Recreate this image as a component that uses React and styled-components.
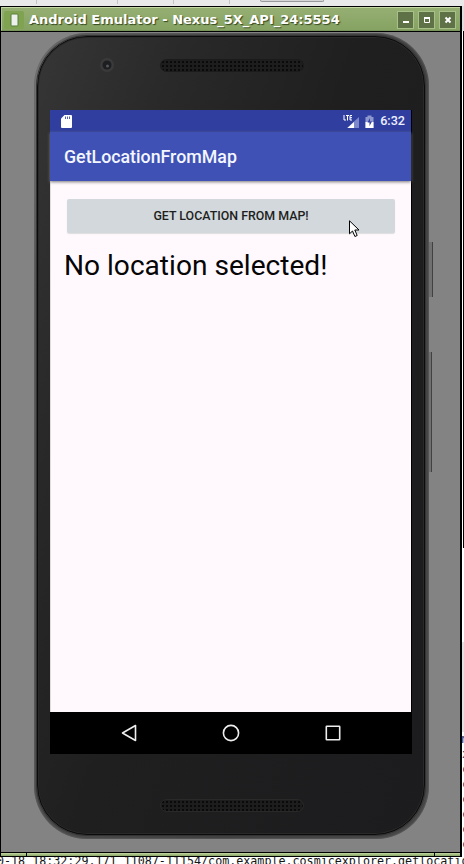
import React from "react";
import styled, { createGlobalStyle } from "styled-components";

const GlobalStyle = createGlobalStyle`
  * { box-sizing: border-box; }
  body { margin: 0; overflow: hidden; background: #fff; }
`;

const Desktop = styled.div`
  width: 464px;
  height: 864px;
  overflow: hidden;
  display: grid;
  grid-template-columns: 462px 2px;
  grid-template-rows: 6px 851px 7px;
  background: #fff;
`;

const TopStrip = styled.div`
  grid-column: 1 / 3;
  display: flex;
  background: #e9e9e9;
`;

const Tick = styled.span`
  flex: none;
  width: 1px;
  height: 4px;
  margin-left: ${(p) => p.$gap}px;
  background: #c4c4c4;
`;

const Tab = styled.span`
  flex: none;
  width: 64px;
  height: 2px;
  margin-left: ${(p) => p.$gap}px;
  border: 1px solid #999;
  border-top: 0;
  border-radius: 0 0 3px 3px;
  background: #d5d5d5;
`;

const Window = styled.section`
  display: grid;
  grid-template-rows: 24px 1px 820px 4px;
  border: 1px solid #000;
  border-right-width: 2px;
  background: #000;
`;

const TitleBar = styled.header`
  display: flex;
  align-items: center;
  padding: 1px 4px 0 2px;
  border-top: 1px solid #c4d8a4;
  border-left: 1px solid #b0c98c;
  border-bottom: 1px solid #78955b;
  background: linear-gradient(#95af72, #86a363);
`;

const AppIcon = styled.svg`
  flex: none;
  width: 20px;
  height: 18px;
`;

const Title = styled.h1`
  flex: 1;
  margin: 1px 0 0 5px;
  color: #fff;
  font: bold 13px/18px "DejaVu Sans", sans-serif;
  text-shadow: 1px 1px 1px #35451f;
  white-space: nowrap;
`;

const Controls = styled.div`
  display: flex;
  gap: 4px;
`;

const ControlButton = styled.button`
  width: 17px;
  height: 18px;
  padding: 0;
  border: 1px solid #a8c188;
  background: #5e7147;
  svg { display: block; }
`;

const Body = styled.main`
  grid-row: 3;
  display: flex;
  padding: 1px 0 0 33px;
  background: #838383;
`;

const Phone = styled.div`
  position: relative;
  width: 395px;
  height: 806px;
  padding: 3px 4px 4px 3px;
  border-radius: 53px;
  background: linear-gradient(100deg, #8c8c8c 0, #707070 2%, #555 8%, #4a4a4a 30%, #404040 60%, #484848 100%);
  box-shadow: inset 0 0 1px 1px #6668;
`;

const Face = styled.div`
  display: grid;
  grid-template-rows: 73px 644px 81px;
  height: 799px;
  padding: 0 12px;
  border: 1px solid #0b0b0b;
  border-radius: 50px;
  background: linear-gradient(110deg, #363636 0, #292929 22%, #1f1f20 48%, #1c1c1e 100%);
  box-shadow: 0 0 0 1px #343434, inset 0 0 0 1px #292929;
`;

const SideKey = styled.i`
  position: absolute;
  left: ${(p) => p.$x}px;
  top: ${(p) => p.$y}px;
  width: ${(p) => p.$w}px;
  height: ${(p) => p.$h}px;
  border-right: 1px solid #414141;
  background: #707070;
`;

const TopBezel = styled.div`
  display: flex;
  align-items: flex-start;
  padding-top: 20px;
`;

const Camera = styled.svg`
  flex: none;
  width: 16px;
  height: 16px;
  margin: 0 0 0 49px;
`;

const Speaker = styled.div`
  flex: none;
  width: 144px;
  height: 13px;
  margin: ${(p) => p.$margin};
  border: 1px solid ${(p) => p.$edge};
  border-radius: 7px;
  background: radial-gradient(circle at 2px 2px, #0a0a0a 0.8px, transparent 1.2px) 0 0 / 4px 4px, #1d1d1d;
`;

const BottomBezel = styled.div`
  display: flex;
  align-items: flex-start;
`;

const Screen = styled.div`
  display: grid;
  grid-template-rows: 22px 49px 531px 42px;
  width: 362px;
  background: #000;
  font-family: Roboto, sans-serif;
`;

const StatusBar = styled.div`
  display: flex;
  align-items: center;
  width: 361px;
  padding: 0 6px 0 11px;
  background: #303f9f;
  color: #fff;
`;

const StatusIcon = styled.svg`
  flex: none;
  width: ${(p) => p.$w}px;
  height: 15px;
  margin-left: ${(p) => p.$left || 0}px;
`;

const Spacer = styled.span`
  flex: 1;
`;

const Clock = styled.time`
  margin-left: 6px;
  color: #edf0ff;
  font-size: 12.6px;
  font-weight: 500;
  line-height: 22px;
`;

const AppBar = styled.div`
  z-index: 1;
  width: 361px;
  padding: 0 14px;
  background: #3f51b5;
  color: #f3f6ff;
  font-size: 17.8px;
  font-weight: 500;
  line-height: 49px;
  box-shadow: 0 1px 3px #777;
`;

const Content = styled.div`
  width: 361px;
  padding: 18px 16px 0 16px;
  border-left: 1px solid #ddd;
  background: #fff9fe;
`;

const MapButton = styled.button`
  display: block;
  width: 328px;
  height: 34px;
  margin: 0;
  padding: 0;
  border: 0;
  border-radius: 2px;
  background: #d3d8dc;
  box-shadow: 0 1px 1px #ddd;
  color: #1d1f21;
  font: 500 12.4px/34px Roboto, sans-serif;
`;

const Message = styled.p`
  margin: 14px 0 0 -3px;
  color: #050505;
  font-size: 28.1px;
  line-height: 38px;
  white-space: nowrap;
`;

const NavBar = styled.nav`
  display: flex;
  align-items: center;
  justify-content: center;
  gap: 82px;
  background: #000;
`;

const NavIcon = styled.svg`
  width: 20px;
  height: 20px;
  fill: none;
  stroke: #eee;
  stroke-width: 1.6;
`;

const Pointer = styled.svg`
  position: absolute;
  left: 315px;
  top: 187px;
  width: 12px;
  height: 18px;
`;

const ResizeBar = styled.footer`
  grid-row: 4;
  display: grid;
  grid-template-columns: 25px 1fr 25px;
  gap: 1px;
  padding-top: 1px;
  background: #000;
  i { background: linear-gradient(#c4d8a4, #86a363); }
`;

const SideStrip = styled.aside`
  display: grid;
  grid-template-rows: 25px 517px 94px 90px 1fr;
`;

const SidePiece = styled.div`
  background: ${(p) => p.$fill};
  border-left: ${(p) => (p.$line ? "1px solid #fff" : "0")};
`;

const CodeEdge = styled.div`
  color: #26346d;
  font: 12px/15px "DejaVu Sans Mono", monospace;
  text-indent: -1px;
`;

const Console = styled.div`
  grid-column: 1 / 3;
  display: flex;
  align-items: flex-end;
  height: 7px;
  overflow: hidden;
  color: #151515;
  font: 11.7px/12px "DejaVu Sans Mono", monospace;
  white-space: pre;
  span { margin: 0 0 -3px -3px; }
`;

export default function App() {
  return (
    <>
      <GlobalStyle />
      <Desktop>
        <TopStrip>
          <Tick $gap={36} /><Tick $gap={80} /><Tick $gap={55} /><Tick $gap={55} />
          <Tab $gap={30} />
        </TopStrip>
        <Window>
          <TitleBar>
            <AppIcon viewBox="0 0 20 18">
              <rect width="20" height="18" rx="2" fill="#7fa351" />
              <rect x="7" y="3" width="7" height="12" rx="1" fill="#eef0ee" stroke="#57803b" />
            </AppIcon>
            <Title>Android Emulator - Nexus_5X_API_24:5554</Title>
            <Controls>
              <ControlButton aria-label="Minimize">
                <svg width="15" height="16"><path d="M5 10h6" stroke="#fff" strokeWidth="2" /></svg>
              </ControlButton>
              <ControlButton aria-label="Maximize">
                <svg width="15" height="16"><path d="M5 6h6" stroke="#fff" strokeWidth="2" /><path d="M5.5 6v4.5h5V6" fill="none" stroke="#fff" /></svg>
              </ControlButton>
              <ControlButton aria-label="Close">
                <svg width="15" height="16"><path d="m5.5 5.5 5 5m0-5-5 5" stroke="#fff" strokeWidth="2" /></svg>
              </ControlButton>
            </Controls>
          </TitleBar>
          <Body>
            <Phone>
              <SideKey $x={395} $y={209} $w={4} $h={55} />
              <SideKey $x={395} $y={319} $w={3} $h={120} />
              <Face>
                <TopBezel>
                  <Camera viewBox="0 0 16 16">
                    <circle cx="8" cy="8" r="7" fill="#3a3a3a" />
                    <circle cx="8" cy="8" r="4.5" fill="#1d1e20" />
                    <circle cx="8.5" cy="9" r="1.5" fill="#55565b" />
                  </Camera>
                  <Speaker $margin="2px 0 0 45px" $edge="#1b1b1b" />
                </TopBezel>
                <Screen>
                  <StatusBar>
                    <StatusIcon $w={11} viewBox="0 0 11 15">
                      <path d="M3.5 1H10a1 1 0 0 1 1 1v11a1 1 0 0 1-1 1H1a1 1 0 0 1-1-1V4.5z" fill="#fff" />
                      <path d="M4.5 2.5v2.5M6.5 2.5v2.5M8.5 2.5v2.5" stroke="#5360af" />
                    </StatusIcon>
                    <Spacer />
                    <StatusIcon $w={17} viewBox="0 0 17 15">
                      <path d="M16 3v11H4z" fill="#7d88ca" />
                      <path d="M11 8v6H4.5z" fill="#fff" />
                      <path d="M1 1v5h2M3 1.5h3M4.5 1v5.5M9 1.5H7v4.5h2M7 3.7h2" fill="none" stroke="#fff" />
                    </StatusIcon>
                    <StatusIcon $w={9} $left={5} viewBox="0 0 9 15">
                      <path d="M2.5 1.5h4V3H8.5v11H.5V3h2z" fill="#8e98ce" />
                      <path d="M.5 8h8v6h-8z" fill="#fff" />
                      <path d="M5 4 2.5 8.5h2V12L7 7.5H5z" fill="#303f9f" />
                    </StatusIcon>
                    <Clock>6:32</Clock>
                  </StatusBar>
                  <AppBar>GetLocationFromMap</AppBar>
                  <Content>
                    <MapButton>GET LOCATION FROM MAP!</MapButton>
                    <Message>No location selected!</Message>
                  </Content>
                  <NavBar>
                    <NavIcon viewBox="0 0 20 20"><path d="M16.5 2.5v15L3.5 10z" strokeLinejoin="round" /></NavIcon>
                    <NavIcon viewBox="0 0 20 20"><circle cx="10" cy="10" r="7.6" /></NavIcon>
                    <NavIcon viewBox="0 0 20 20"><rect x="3.3" y="3.3" width="13.4" height="13.4" rx=".5" /></NavIcon>
                  </NavBar>
                </Screen>
                <BottomBezel>
                  <Speaker $margin="45px 0 0 110px" $edge="#29292a" />
                </BottomBezel>
              </Face>
              <Pointer viewBox="0 0 12 18">
                <path d="M.5.8v13l3-2.8 2.4 5.5 2.3-1L5.8 10H10z" fill="#fff" stroke="#000" />
              </Pointer>
            </Phone>
          </Body>
          <ResizeBar><i /><i /><i /></ResizeBar>
        </Window>
        <SideStrip>
          <SidePiece $fill="#ddd" />
          <SidePiece $fill="#000" $line />
          <SidePiece $fill="#fff" />
          <SidePiece $fill="#e2e2e2" />
          <CodeEdge>n<br />x<br />c<br />c<br />c<br />c<br />c<br />c</CodeEdge>
        </SideStrip>
        <Console><span>0-18 18:32:29.171 11087-11154/com.example.cosmicexplorer.getlocation</span></Console>
      </Desktop>
    </>
  );
}
